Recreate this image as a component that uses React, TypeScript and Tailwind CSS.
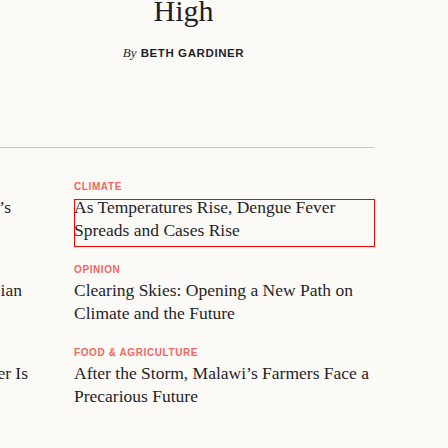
import React from "react";

const serif = { fontFamily: '"Liberation Serif", "Times New Roman", serif' };
const sans = { fontFamily: '"Liberation Sans", Arial, sans-serif' };

const rows = [
  {
    label: "Climate",
    title: "As Temperatures Rise, Dengue Fever Spreads and Cases Rise",
    left: "A Nation’s",
    leftW: "w-[11px]",
    boxed: true,
  },
  {
    label: "Opinion",
    title: "Clearing Skies: Opening a New Path on Climate and the Future",
    left: "Ethiopian",
    leftW: "w-[22px]",
    boxed: false,
  },
  {
    label: "Food & Agriculture",
    title: "After the Storm, Malawi’s Farmers Face a Precarious Future",
    left: "The Water Is",
    leftW: "w-[28px]",
    boxed: false,
  },
];

export default function App() {
  return (
    <div className="w-[448px] h-[448px] overflow-hidden bg-[#fbfaf7] text-[#1f1f2a]">
      <div className="w-[374px]">
        <div className="w-[367px] text-center">
          <h1 className="mt-[-7px] text-[30px] leading-[36px]" style={serif}>
            High
          </h1>
          <p className="mt-[12px] leading-[20px]">
            <span className="italic text-[13px]" style={serif}>
              By
            </span>{" "}
            <span className="text-[11.5px] font-bold tracking-[0.6px]" style={sans}>
              BETH GARDINER
            </span>
          </p>
        </div>
        <div className="mt-[84px] h-px bg-[#cbc7bf]" />
        <div className="mt-[33px] flex gap-[34px]">
          <div className="w-[40px] flex flex-col gap-[22px]">
            {rows.map((r) => (
              <div key={r.left}>
                <div className="h-[15px]" />
                <div className="h-[46px] text-[17.5px] leading-[23px]" style={serif}>
                  <div className={`${r.leftW} flex justify-end overflow-hidden`}>
                    <span className="whitespace-nowrap">{r.left}</span>
                  </div>
                </div>
              </div>
            ))}
          </div>
          <div className="w-[300px] flex flex-col gap-[22px]">
            {rows.map((r) => (
              <div key={r.label}>
                <div
                  className="h-[12px] leading-[12px] text-[10px] font-bold uppercase tracking-[0.6px] text-[#f2675d]"
                  style={sans}
                >
                  {r.label}
                </div>
                <div className="relative mt-[3px]">
                  <h2 className="text-[17.5px] leading-[23px]" style={serif}>
                    {r.title}
                  </h2>
                  {r.boxed && (
                    <div className="absolute left-0 top-[3px] w-[301px] h-[48px] border border-[#ff0000] pointer-events-none" />
                  )}
                </div>
              </div>
            ))}
          </div>
        </div>
      </div>
    </div>
  );
}
